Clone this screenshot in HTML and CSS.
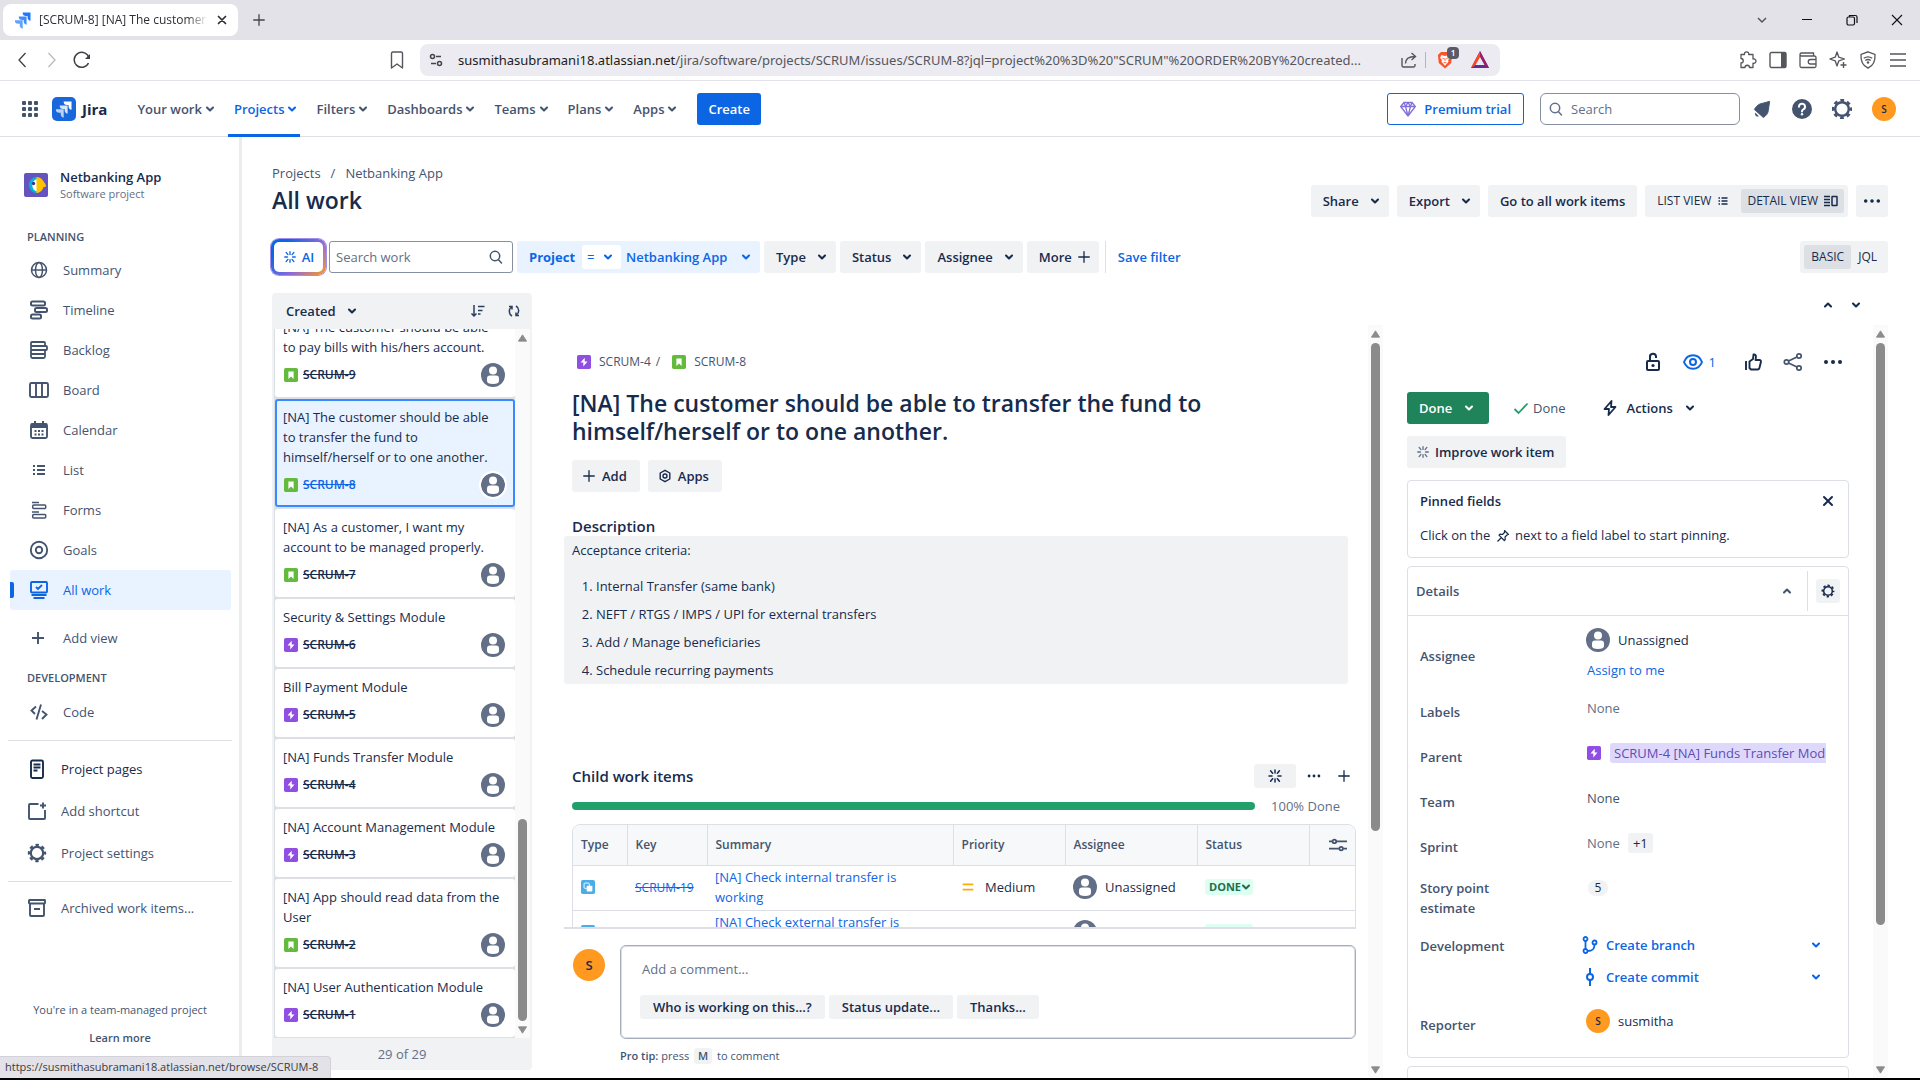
FILE: index.html
```html
<!DOCTYPE html>
<html lang="en">
<head>
<meta charset="utf-8">
<title>[SCRUM-8] [NA] The customer should be able to transfer the fund - Jira</title>
<link rel="stylesheet" href="styles.css">
</head>
<body>
<svg class="sprite" aria-hidden="true">
  <symbol id="chev" viewBox="0 0 16 16"><path d="M5 6.500l3 3 3-3" fill="none" stroke="currentColor" stroke-width="2.100" stroke-linecap="round" stroke-linejoin="round"/></symbol>
  <symbol id="chev-up" viewBox="0 0 16 16"><path d="M5 9.500l3-3 3 3" fill="none" stroke="currentColor" stroke-width="2.100" stroke-linecap="round" stroke-linejoin="round"/></symbol>
  <symbol id="jira" viewBox="0 0 24 24"><path d="M22 2H11.500a4.700 4.700 0 0 0 4.700 4.700h1.900v1.900A4.700 4.700 0 0 0 22 13z"/><path opacity=".85" d="M16.800 7.200H6.300A4.700 4.700 0 0 0 11 11.900h1.900v1.900a4.700 4.700 0 0 0 3.900 4.600z"/><path opacity=".7" d="M11.600 12.400H1.100a4.700 4.700 0 0 0 4.700 4.700h1.900V19a4.700 4.700 0 0 0 3.900 4.600z"/></symbol>
  <symbol id="search" viewBox="0 0 16 16"><g fill="none" stroke="currentColor" stroke-width="1.500" stroke-linecap="round"><circle cx="7" cy="7" r="4.700"/><path d="M10.500 10.800L13.500 14"/></g></symbol>
  <symbol id="rays" viewBox="0 0 16 16"><path d="M8 2v3M8 11v3M2 8h3M11 8h3M3.600 2.800l2 2.500M12.400 2.800l-2 2.500M3.600 13.200l2-2.500M12.400 13.200l-2-2.500" fill="none" stroke="currentColor" stroke-width="1.500" stroke-linecap="round"/></symbol>
  <symbol id="plus" viewBox="0 0 16 16"><path d="M8 2v12M2 8h12" fill="none" stroke="currentColor" stroke-width="1.500" stroke-linecap="round"/></symbol>
  <symbol id="dots" viewBox="0 0 20 20"><g fill="currentColor"><circle cx="3" cy="10" r="2"/><circle cx="10" cy="10" r="2"/><circle cx="17" cy="10" r="2"/></g></symbol>
  <symbol id="cross" viewBox="0 0 16 16"><path d="M4 4l8 8M12 4l-8 8" fill="none" stroke="currentColor" stroke-width="2" stroke-linecap="round"/></symbol>
  <symbol id="gear" viewBox="0 0 24 24"><g fill="none" stroke="currentColor"><circle cx="12" cy="12" r="6.800" stroke-width="2.400"/><circle cx="12" cy="12" r="8.800" stroke-width="2.600" stroke-dasharray="3.700 3.210" stroke-dashoffset="1.900"/></g></symbol>
  <symbol id="person" viewBox="0 0 24 24"><circle cx="12" cy="12" r="12" fill="#626f86"/><circle cx="12" cy="7.500" r="4" fill="#fff"/><path d="M6 15.500a3 3 0 0 1 3-3h6a3 3 0 0 1 3 3v2.500q0 3-6 3t-6-3z" fill="#fff"/></symbol>
  <symbol id="story" viewBox="0 0 16 16"><rect width="16" height="16" rx="2" fill="#63ba3c"/><path d="M5 4h6v8.500l-3-2.800-3 2.800z" fill="#fff"/></symbol>
  <symbol id="epic" viewBox="0 0 16 16"><rect width="16" height="16" rx="2" fill="#904ee2"/><path d="M8.800 3L4 8.700h3.200V13L12 7.300H8.800z" fill="#fff"/></symbol>
  <symbol id="subtask" viewBox="0 0 16 16"><rect width="16" height="16" rx="2" fill="#4bade8"/><rect x="3.500" y="3.500" width="6" height="6" rx="1" fill="none" stroke="#fff"/><rect x="6.500" y="6.500" width="6.500" height="6.500" rx="1" fill="#fff"/></symbol>
  <symbol id="list" viewBox="0 0 16 16"><path d="M2 4h2M2 8h2M2 12h2M6 4h8M6 8h8M6 12h8" stroke="currentColor" stroke-width="1.800"/></symbol>
  <symbol id="prio" viewBox="0 0 16 16"><path d="M2 5h12M2 11h12" stroke="#ffab00" stroke-width="2.200"/></symbol>
  <symbol id="tri-up" viewBox="0 0 10 8"><path d="M5 0.500L9.500 7.500H0.500z" fill="#8b8b8b" stroke="#8b8b8b" stroke-linejoin="round"/></symbol>
  <symbol id="tri-down" viewBox="0 0 10 8"><path d="M5 7.500L9.500 0.500H0.500z" fill="#8b8b8b" stroke="#8b8b8b" stroke-linejoin="round"/></symbol>
</svg>

<header class="tabstrip">
  <div class="tab">
    <svg class="i18 fav"><use href="#jira"/></svg>
    <span class="tab-title">[SCRUM-8] [NA] The customer should be able</span>
    <button class="bare" aria-label="Close tab"><svg class="i14"><use href="#cross"/></svg></button>
  </div>
  <button class="bare newtab" aria-label="New tab"><svg class="i14"><use href="#plus"/></svg></button>
  <div class="winctl">
    <button class="bare" aria-label="Search tabs"><svg class="i14" viewBox="0 0 14 14"><path d="M3 5l4 4 4-4" fill="none" stroke="#55565c" stroke-width="1.500"/></svg></button>
    <button class="bare" aria-label="Minimize"><svg class="i14" viewBox="0 0 14 14"><path d="M2 6.500h10" stroke="#111"/></svg></button>
    <button class="bare" aria-label="Restore"><svg class="i14" viewBox="0 0 14 14"><g fill="none" stroke="#111" stroke-width="1.200"><rect x="2" y="4" width="7.500" height="8" rx="1.500"/><path d="M4.500 4V2.500h6a1.500 1.500 0 0 1 1.500 1.500v6"/></g></svg></button>
    <button class="bare" aria-label="Close"><svg class="i14" viewBox="0 0 14 14"><path d="M2 2l10 10M12 2L2 12" stroke="#111" stroke-width="1.100"/></svg></button>
  </div>
</header>

<div class="toolbar">
  <div class="navbtns">
    <button class="bare" aria-label="Back"><svg class="i18" viewBox="0 0 18 18"><path d="M12.500 2L6 9l6.500 7" fill="none" stroke="#3f4045" stroke-width="1.300"/></svg></button>
    <button class="bare" aria-label="Forward"><svg class="i18" viewBox="0 0 18 18"><path d="M5.500 2L12 9l-6.500 7" fill="none" stroke="#b9b9bf" stroke-width="1.300"/></svg></button>
    <button class="bare" aria-label="Reload"><svg class="i18" viewBox="0 0 18 18"><path d="M15.500 12A7.500 7.500 0 1 1 16 7" fill="none" stroke="#3f4045" stroke-width="1.500"/><path d="M17 3v5h-5z" fill="#3f4045"/></svg></button>
  </div>
  <button class="bare bookmark" aria-label="Bookmark"><svg class="i18" viewBox="0 0 18 18"><path d="M3.500 2.500a1.500 1.500 0 0 1 1.500-1.500h8a1.500 1.500 0 0 1 1.500 1.500V17L9 13l-5.500 4z" fill="none" stroke="#55565c" stroke-width="1.400" stroke-linejoin="round"/></svg></button>
  <div class="urlbar">
    <svg class="i14" viewBox="0 0 14 14"><g fill="none" stroke="#44454b" stroke-width="1.500"><circle cx="3.500" cy="3.500" r="2"/><path d="M7 3.500h5M2 10.500h5"/><circle cx="10.500" cy="10.500" r="2"/></g></svg>
    <span class="url"><b>susmithasubramani18.atlassian.net</b>/jira/software/projects/SCRUM/issues/SCRUM-8?jql=project%20%3D%20"SCRUM"%20ORDER%20BY%20created...</span>
    <svg class="i16" viewBox="0 0 16 16"><g fill="none" stroke="#55565c" stroke-width="1.400"><path d="M1 6v7.500a1.500 1.500 0 0 0 1.500 1.500h10a1.500 1.500 0 0 0 1.500-1.500V12"/><path d="M4.500 11.500C4.500 7 8 4.500 14 4.500M10.500 1L14.500 4.500l-4 3.500"/></g></svg>
    <span class="url-sep"></span>
    <span class="brave"><svg width="16" height="18" viewBox="0 0 18 20"><path d="M4.500 1h9L17 4.500l-1 9L9 19.500 2 13.500l-1-9z" fill="#fb542b"/><path d="M5 4.500l4 1 4-1 1.500 3-2 2.500.5 2-4 4.500-4-4.500.5-2-2-2.500z" fill="#fff"/><path d="M6 8l2 .8M12 8l-2 .8M9 8v3M7.300 13h3.400" stroke="#fb542b" stroke-width="1"/></svg><i class="count">1</i></span>
    <svg width="18" height="18" viewBox="0 0 18 18"><path d="M9 0L0 17h18z" fill="#662d91"/><path d="M9 0L0 17l4-2.500L9 6z" fill="#ff4724"/><path d="M9 0l9 17-4-2.500L9 6z" fill="#9e1f63"/><path d="M9 6l-4.500 8h9z" fill="#ecebf1"/></svg>
  </div>
  <div class="exts">
    <svg class="i18" viewBox="0 0 18 18"><path d="M2 3.500h3.500c-.8-3.500 5-3.500 4.200 0H14V8c4-.8 4 5 0 4.200V16.500h-3.500c0-3-4.500-3-4.500 0H2V12c3 0 3-4.500 0-4.500z" fill="none" stroke="#55565c" stroke-width="1.300" stroke-linejoin="round"/></svg>
    <svg class="i18" viewBox="0 0 18 18"><rect x="1" y="1.500" width="16" height="15" rx="1.500" fill="none" stroke="#55565c" stroke-width="1.400"/><path d="M12 1.500h5v15h-5z" fill="#55565c"/></svg>
    <svg class="i18" viewBox="0 0 18 18"><g fill="none" stroke="#55565c" stroke-width="1.300"><path d="M1 3.500a1.500 1.500 0 0 1 1.500-1.500h12v3M1 3.500V15a1.500 1.500 0 0 0 1.500 1.500h13A1.500 1.500 0 0 0 17 15V6.500A1.500 1.500 0 0 0 15.500 5h-13A1.500 1.500 0 0 1 1 3.500z"/><path d="M17 8.500h-5.500a2.200 2.200 0 0 0 0 4.500H17"/></g></svg>
    <svg class="i18" viewBox="0 0 18 18"><path d="M8 1l1.800 5.200L15.500 8l-5.700 1.800L8 15l-1.800-5.200L.8 8l5.400-1.800z" fill="none" stroke="#55565c" stroke-width="1.300" stroke-linejoin="round"/><path d="M14.500 11v6M11.500 14h6" stroke="#55565c" stroke-width="1.400"/></svg>
    <svg class="i18" viewBox="0 0 18 18"><g fill="none" stroke="#55565c" stroke-width="1.300"><path d="M9 .8l7 2.700c.5 7-1.500 11-7 13.700C3.500 14.500 1.500 10.500 2 3.500z"/><path d="M4.800 7.300q4.200-3 8.400 0M6.300 9.500q2.700-2 5.400 0"/></g><circle cx="9" cy="11.500" r="1.200" fill="#55565c"/></svg>
    <svg class="i18" viewBox="0 0 18 18"><path d="M1 3h16M1 9h16M1 15h16" stroke="#55565c" stroke-width="1.500"/></svg>
  </div>
</div>

<nav class="topnav">
  <button class="bare grid9" aria-label="Apps switcher"><svg class="i18" viewBox="0 0 18 18" fill="#44546f"><rect x="1" y="1" width="4" height="4" rx="1"/><rect x="7" y="1" width="4" height="4" rx="1"/><rect x="13" y="1" width="4" height="4" rx="1"/><rect x="1" y="7" width="4" height="4" rx="1"/><rect x="7" y="7" width="4" height="4" rx="1"/><rect x="13" y="7" width="4" height="4" rx="1"/><rect x="1" y="13" width="4" height="4" rx="1"/><rect x="7" y="13" width="4" height="4" rx="1"/><rect x="13" y="13" width="4" height="4" rx="1"/></svg></button>
  <a href="#" class="logo"><span class="logo-box"><svg class="i18"><use href="#jira"/></svg></span>Jira</a>
  <div class="menu">
    <button>Your work<svg class="i16"><use href="#chev"/></svg></button>
    <button class="on">Projects<svg class="i16"><use href="#chev"/></svg></button>
    <button>Filters<svg class="i16"><use href="#chev"/></svg></button>
    <button>Dashboards<svg class="i16"><use href="#chev"/></svg></button>
    <button>Teams<svg class="i16"><use href="#chev"/></svg></button>
    <button>Plans<svg class="i16"><use href="#chev"/></svg></button>
    <button>Apps<svg class="i16"><use href="#chev"/></svg></button>
  </div>
  <button class="create">Create</button>
  <button class="premium"><svg class="i16" viewBox="0 0 16 16"><path d="M4 1.500h8l3.300 4L8 15 .7 5.500zM.7 5.500h14.600M4 1.500l1.500 4L8 15l2.500-9.500 1.500-4M5.500 5.500L8 1.500l2.500 4" fill="none" stroke="#8270db" stroke-width="1.300" stroke-linejoin="round"/></svg>Premium trial</button>
  <label class="topsearch"><svg class="i16"><use href="#search"/></svg><input type="text" placeholder="Search" aria-label="Search"></label>
  <button class="bare topicon" aria-label="Notifications"><svg class="i18" viewBox="0 0 20 20"><path d="M18.500 1.500L17 12c-.5 3-2 5-5.500 7.500L1.500 10.500C4 6 7 4 11 3.500z" fill="#44546f" stroke="#44546f" stroke-linejoin="round"/><path d="M2.500 14a3 3 0 0 0 4 4z" fill="#44546f"/></svg></button>
  <button class="bare topicon" aria-label="Help"><svg class="i20" viewBox="0 0 20 20"><circle cx="10" cy="10" r="10" fill="#44546f"/><path d="M7 7.700a3 3 0 1 1 4.300 2.700c-1 .5-1.300 1-1.300 2" fill="none" stroke="#fff" stroke-width="2" stroke-linecap="round"/><circle cx="10" cy="15.300" r="1.200" fill="#fff"/></svg></button>
  <button class="bare topicon" aria-label="Settings"><svg class="i20" viewBox="2 2 20 20"><use href="#gear" width="24" height="24"/></svg></button>
  <button class="bare avatar a24" aria-label="Profile">S</button>
</nav>

<div class="body">
  <aside class="side">
    <div class="proj">
      <svg class="i24" viewBox="0 0 24 24"><rect width="24" height="24" rx="2" fill="#6554c0"/><path d="M13 4a8 8 0 1 0 0 16z" fill="#00b8d9"/><path d="M13 6a6.500 6.500 0 0 0 0 12.500z" fill="#fff"/><path d="M12.500 4c5 0 7 4 9.500 8.500 0 2-2 1.500-2.500 1.500-1 3.500-3.500 6-7 6z" fill="#ffc400"/><circle cx="9.500" cy="10.500" r="1.700" fill="#403294"/></svg>
      <div><b>Netbanking App</b><small>Software project</small></div>
    </div>
    <h6>PLANNING</h6>
    <a href="#"><svg class="i20" viewBox="0 0 20 20"><g fill="none" stroke="currentColor" stroke-width="1.500"><circle cx="10" cy="10" r="7.500"/><ellipse cx="10" cy="10" rx="3.500" ry="7.500"/><path d="M3 10h14"/></g></svg>Summary</a>
    <a href="#"><svg class="i20" viewBox="0 0 20 20"><g fill="none" stroke="currentColor" stroke-width="2"><rect x="2" y="1.500" width="14" height="4" rx="1.500"/><rect x="6" y="8" width="12" height="4" rx="1.500"/><rect x="2" y="14.500" width="10" height="4" rx="1.500"/></g></svg>Timeline</a>
    <a href="#"><svg class="i20" viewBox="0 0 20 20"><g fill="none" stroke="currentColor" stroke-width="1.800"><rect x="2" y="2" width="14" height="4" rx="1"/><rect x="2" y="6" width="16" height="4" rx="1"/><path d="M2 10v6.500a1.500 1.500 0 0 0 1.500 1.500h11a1.500 1.500 0 0 0 1.500-1.500V10M2 14h14"/></g></svg>Backlog</a>
    <a href="#"><svg class="i20" viewBox="0 0 20 20"><g fill="none" stroke="currentColor" stroke-width="1.900"><rect x="1" y="3" width="18" height="14" rx="1.500"/><path d="M7 3v14M13 3v14"/></g></svg>Board</a>
    <a href="#"><svg class="i20" viewBox="0 0 20 20"><rect x="2" y="4" width="16" height="14" rx="1.500" fill="none" stroke="currentColor" stroke-width="1.900"/><path d="M2 3.500h16V8H2zM5 1h2v3H5zM13 1h2v3h-2z" fill="currentColor"/><path d="M5.500 11h2M9 11h2M12.500 11h2M5.500 14.500h2M9 14.500h2M12.500 14.500h2" stroke="currentColor" stroke-width="1.800"/></svg>Calendar</a>
    <a href="#"><svg class="i20" viewBox="-2 -2 20 20"><use href="#list" width="16" height="16"/></svg>List</a>
    <a href="#"><svg class="i20" viewBox="0 0 20 20"><g fill="none" stroke="currentColor" stroke-width="1.500"><path d="M3 2.500h7M3 12h7"/><rect x="3.700" y="5" width="13" height="3.500" rx="1"/><rect x="3.700" y="14.500" width="13" height="3.500" rx="1"/></g></svg>Forms</a>
    <a href="#"><svg class="i20" viewBox="0 0 20 20"><g fill="none" stroke="currentColor" stroke-width="1.900"><circle cx="10" cy="10" r="8.200"/><circle cx="10" cy="10" r="3.200"/></g></svg>Goals</a>
    <a href="#" class="cur"><svg class="i20" viewBox="0 0 20 20"><g fill="none" stroke="currentColor" stroke-width="1.900"><rect x="2" y="2" width="16" height="10.500" rx="1"/><path d="M7 7l2 2 4-4M2.500 15h15M4.500 18h11"/></g></svg>All work</a>
    <a href="#" class="addview"><svg class="i20" viewBox="0 0 20 20"><path d="M9 4v12M3 10h12" stroke="currentColor" stroke-width="1.900"/></svg>Add view</a>
    <h6 class="dev">DEVELOPMENT</h6>
    <a href="#"><svg class="i20" viewBox="0 0 20 20"><path d="M7 4.500L2.500 8.500 6 12M13 9l4.500 3.500L13 17M12 2.500L7.500 17.500" fill="none" stroke="currentColor" stroke-width="1.900"/></svg>Code</a>
    <hr class="rule-a">
    <a href="#" class="low strong"><svg class="i20" viewBox="0 0 20 20"><g fill="none" stroke="currentColor" stroke-width="1.900"><rect x="4" y="1.500" width="12" height="17.500" rx="1.500"/><path d="M6.500 5.500h7M6.500 8.500h7M6.500 11.500h4"/></g></svg>Project pages</a>
    <a href="#" class="low"><svg class="i20" viewBox="0 0 20 20"><path d="M11.500 3H3a1 1 0 0 0-1 1v13a1 1 0 0 0 1 1h14a1 1 0 0 0 1-1V9M16 1.500v6M13 4.500h6" fill="none" stroke="currentColor" stroke-width="1.900"/></svg>Add shortcut</a>
    <a href="#" class="low"><svg class="i20" viewBox="1 1 22 22"><use href="#gear" width="24" height="24"/></svg>Project settings</a>
    <hr class="rule-b">
    <a href="#" class="low"><svg class="i20" viewBox="0 0 20 20"><g fill="none" stroke="currentColor" stroke-width="1.900"><rect x="2" y="2" width="16" height="3.500" rx=".5"/><path d="M3 5.500V17a1 1 0 0 0 1 1h12a1 1 0 0 0 1-1V5.500M7 11h6"/></g></svg>Archived work items...</a>
    <p class="managed">You're in a team-managed project</p>
    <a href="#" class="learn">Learn more</a>
  </aside>

  <main>
    <p class="crumbs"><a href="#">Projects</a><span>/</span><a href="#">Netbanking App</a></p>
    <div class="headrow">
      <h1>All work</h1>
      <div class="acts">
        <button class="btn drop">Share<svg class="i16"><use href="#chev"/></svg></button>
        <button class="btn drop">Export<svg class="i16"><use href="#chev"/></svg></button>
        <button class="btn">Go to all work items</button>
        <div class="toggle">
          <button>LIST VIEW<svg class="i12"><use href="#list"/></svg></button>
          <button class="sel">DETAIL VIEW<svg class="i14" viewBox="0 0 14 14"><path d="M0 2.500h6M0 5.500h6M0 8.500h6M0 11.500h6" stroke="currentColor" stroke-width="1.500"/><rect x="8" y="2.500" width="5" height="9" rx=".5" fill="none" stroke="currentColor" stroke-width="1.500"/></svg></button>
        </div>
        <button class="btn sq" aria-label="More actions"><svg class="i18"><use href="#dots"/></svg></button>
      </div>
    </div>

    <div class="filters">
      <button class="ai"><svg class="i14"><use href="#rays"/></svg>AI</button>
      <label class="fsearch"><input type="text" placeholder="Search work" aria-label="Search work"><svg class="i16"><use href="#search"/></svg></label>
      <div class="jqlpart">
        <button class="pj">Project</button><button class="eq">=<svg class="i16"><use href="#chev"/></svg></button><button class="val">Netbanking App<svg class="i16"><use href="#chev"/></svg></button>
      </div>
      <button class="btn drop">Type<svg class="i16"><use href="#chev"/></svg></button>
      <button class="btn drop">Status<svg class="i16"><use href="#chev"/></svg></button>
      <button class="btn drop">Assignee<svg class="i16"><use href="#chev"/></svg></button>
      <button class="btn more">More<svg class="i14"><use href="#plus"/></svg></button>
      <span class="vsep"></span>
      <a href="#" class="save">Save filter</a>
      <div class="toggle mode"><button class="sel">BASIC</button><button>JQL</button></div>
    </div>

    <div class="split">
      <section class="issues">
        <div class="issues-head"><button class="bare created">Created<svg class="i16"><use href="#chev"/></svg></button>
          <button class="bare" aria-label="Sort order"><svg class="i16" viewBox="0 0 16 16"><path d="M4 2v11M1.500 10.500L4 13l2.500-2.500M8 3.500h6.500M8 7.500h4.500M8 11h2.500" fill="none" stroke="#2c3e5d" stroke-width="1.500"/></svg></button>
          <button class="bare" aria-label="Refresh"><svg class="i16" viewBox="0 0 16 16"><path d="M6 13C2.500 11 2.500 6 5.500 4M3 3.500h3v3M10 3C13.500 5 13.500 10 10.500 12M13 12.500h-3v-3" fill="none" stroke="#2c3e5d" stroke-width="1.500"/></svg></button>
        </div>
        <div class="issues-body">
          <div class="cards">
            <article class="card"><p>[NA] The customer should be able to pay bills with his/hers account.</p><div><svg class="i14"><use href="#story"/></svg><a href="#">SCRUM-9</a><svg class="i24 who"><use href="#person"/></svg></div></article>
            <article class="card picked"><p>[NA] The customer should be able to transfer the fund to himself/herself or to one another.</p><div><svg class="i14"><use href="#story"/></svg><a href="#">SCRUM-8</a><svg class="i24 who"><use href="#person"/></svg></div></article>
            <article class="card"><p>[NA] As a customer, I want my account to be managed properly.</p><div><svg class="i14"><use href="#story"/></svg><a href="#">SCRUM-7</a><svg class="i24 who"><use href="#person"/></svg></div></article>
            <article class="card"><p>Security &amp; Settings Module</p><div><svg class="i14"><use href="#epic"/></svg><a href="#">SCRUM-6</a><svg class="i24 who"><use href="#person"/></svg></div></article>
            <article class="card"><p>Bill Payment Module</p><div><svg class="i14"><use href="#epic"/></svg><a href="#">SCRUM-5</a><svg class="i24 who"><use href="#person"/></svg></div></article>
            <article class="card"><p>[NA] Funds Transfer Module</p><div><svg class="i14"><use href="#epic"/></svg><a href="#">SCRUM-4</a><svg class="i24 who"><use href="#person"/></svg></div></article>
            <article class="card"><p>[NA] Account Management Module</p><div><svg class="i14"><use href="#epic"/></svg><a href="#">SCRUM-3</a><svg class="i24 who"><use href="#person"/></svg></div></article>
            <article class="card"><p>[NA] App should read data from the User</p><div><svg class="i14"><use href="#story"/></svg><a href="#">SCRUM-2</a><svg class="i24 who"><use href="#person"/></svg></div></article>
            <article class="card"><p>[NA] User Authentication Module</p><div><svg class="i14"><use href="#epic"/></svg><a href="#">SCRUM-1</a><svg class="i24 who"><use href="#person"/></svg></div></article>
          </div>
          <div class="sbar"><svg class="tri"><use href="#tri-up"/></svg><div class="rail low-thumb"><i></i></div><svg class="tri"><use href="#tri-down"/></svg></div>
        </div>
        <div class="issues-foot">29 of 29</div>
      </section>

      <section class="detail">
        <div class="pager"><button class="bare" aria-label="Previous"><svg class="i16"><use href="#chev-up"/></svg></button><button class="bare" aria-label="Next"><svg class="i16"><use href="#chev"/></svg></button></div>
        <div class="panes">
          <div class="issue">
            <div class="scroll">
              <p class="keys"><svg class="i14"><use href="#epic"/></svg><a href="#">SCRUM-4</a><span>/</span><svg class="i14"><use href="#story"/></svg><a href="#">SCRUM-8</a></p>
              <h2>[NA] The customer should be able to transfer the fund to himself/herself or to one another.</h2>
              <div class="addrow">
                <button class="btn"><svg class="i14"><use href="#plus"/></svg>Add</button>
                <button class="btn"><svg class="i14" viewBox="0 0 14 14"><g fill="none" stroke="currentColor" stroke-width="1.400"><path d="M7 1.300l4.800 2.700v6L7 12.700 2.200 10V4z" stroke-linejoin="round"/><circle cx="7" cy="7" r="2"/></g></svg>Apps</button>
              </div>
              <h3>Description</h3>
              <div class="desc"><p>Acceptance criteria:</p>
                <ol><li>Internal Transfer (same bank)</li><li>NEFT / RTGS / IMPS / UPI for external transfers</li><li>Add / Manage beneficiaries</li><li>Schedule recurring payments</li></ol>
              </div>
              <div class="childhead"><h3>Child work items</h3>
                <button class="raybtn" aria-label="Suggest child work items"><svg class="i16"><use href="#rays"/></svg></button>
                <button class="bare" aria-label="More"><svg class="i14"><use href="#dots"/></svg></button>
                <button class="bare" aria-label="Create child"><svg class="i14"><use href="#plus"/></svg></button>
              </div>
              <div class="prog"><div class="bar"></div><span>100% Done</span></div>
              <div class="tbl">
                <table>
                  <colgroup><col class="c1"><col class="c2"><col class="c3"><col class="c4"><col class="c5"><col class="c6"><col class="c7"></colgroup>
                  <thead><tr><th>Type</th><th>Key</th><th>Summary</th><th>Priority</th><th>Assignee</th><th>Status</th><th class="cfg"><svg class="i18" viewBox="0 0 20 20"><g fill="none" stroke="#44546f" stroke-width="2"><circle cx="6" cy="6" r="2"/><path d="M0 6h4M8 6h12M0 14h11M16 14h4"/><circle cx="13.500" cy="14" r="2"/></g></svg></th></tr></thead>
                  <tbody>
                    <tr><td><svg class="i14"><use href="#subtask"/></svg></td><td><a href="#" class="done">SCRUM-19</a></td><td class="sum"><a href="#">[NA] Check internal transfer is working</a></td><td><span class="cell"><svg class="i14"><use href="#prio"/></svg>Medium</span></td><td><span class="cell who-cell"><svg class="i24"><use href="#person"/></svg>Unassigned</span></td><td><button class="loz">DONE<svg class="i10" viewBox="3 3 10 10"><use href="#chev" width="16" height="16"/></svg></button></td><td></td></tr>
                    <tr><td><svg class="i14"><use href="#subtask"/></svg></td><td><a href="#" class="done">SCRUM-20</a></td><td class="sum"><a href="#">[NA] Check external transfer is working</a></td><td><span class="cell"><svg class="i14"><use href="#prio"/></svg>Medium</span></td><td><span class="cell who-cell"><svg class="i24"><use href="#person"/></svg>Unassigned</span></td><td><button class="loz">DONE<svg class="i10" viewBox="3 3 10 10"><use href="#chev" width="16" height="16"/></svg></button></td><td></td></tr>
                  </tbody>
                </table>
              </div>
            </div>
            <div class="comment">
              <span class="avatar a32">S</span>
              <div class="cwrap">
                <div class="cbox"><textarea rows="1" placeholder="Add a comment..." aria-label="Add a comment"></textarea>
                  <div><button>Who is working on this...?</button><button>Status update...</button><button>Thanks...</button></div>
                </div>
                <p class="tip"><b>Pro tip:</b> press <kbd>M</kbd> to comment</p>
              </div>
            </div>
          </div>
          <div class="sbar tall"><svg class="tri"><use href="#tri-up"/></svg><div class="rail mid-thumb"><i></i></div><svg class="tri"><use href="#tri-down"/></svg></div>

          <div class="meta">
            <div class="icons">
              <button class="bare" aria-label="Unlock"><svg class="i20" viewBox="0 0 20 20"><g fill="none" stroke="#172b4d" stroke-width="2"><rect x="4" y="9" width="12" height="9" rx="1"/><path d="M7 9V5a3 3 0 0 1 6-.5v1.500"/></g><circle cx="10" cy="13.500" r="1.600" fill="#172b4d"/></svg></button>
              <button class="bare watch" aria-label="Watchers"><svg class="i20" viewBox="0 0 20 20"><g fill="none" stroke="#0c66e4" stroke-width="2"><path d="M1 10c3.500-9 14.500-9 18 0-3.500 9-14.500 9-18 0z"/><circle cx="10" cy="10" r="3"/></g></svg>1</button>
              <button class="bare" aria-label="Vote"><svg class="i20" viewBox="0 0 20 20"><path d="M3 9v9M6.500 9.500L10 7l.5-4.500c2.500-.5 3 1.500 2 5.500h4c1 0 1.700 1 1.400 2l-1.500 6c-.2 1-1 1.500-2 1.500H8L6.500 16z" fill="none" stroke="#172b4d" stroke-width="1.900" stroke-linejoin="round"/></svg></button>
              <button class="bare" aria-label="Share"><svg class="i20" viewBox="0 0 20 20"><g fill="none" stroke="#44546f" stroke-width="1.700"><circle cx="3.500" cy="10" r="2.200"/><circle cx="16" cy="4" r="2.200"/><circle cx="16" cy="16" r="2.200"/><path d="M5.500 9L14 5M5.500 11l8.500 4"/></g></svg></button>
              <button class="bare" aria-label="Actions"><svg class="i20"><use href="#dots"/></svg></button>
            </div>
            <div class="status"><button class="donebtn">Done<svg class="i16"><use href="#chev"/></svg></button>
              <span class="res"><svg class="i16" viewBox="0 0 16 16"><path d="M1.500 9l4 4L14.500 3.500" fill="none" stroke="#22a06b" stroke-width="1.800"/></svg>Done</span>
              <button class="bare actions"><svg class="i16" viewBox="0 0 16 16"><path d="M9.500 1L2.500 9h4.500l-.5 6L13.500 7H9z" fill="none" stroke="#172b4d" stroke-width="1.800" stroke-linejoin="round"/></svg>Actions<svg class="i16 ch"><use href="#chev"/></svg></button>
            </div>
            <button class="btn improve"><svg class="i14"><use href="#rays"/></svg>Improve work item</button>
            <div class="box pinned"><div><b>Pinned fields</b><button class="bare" aria-label="Dismiss"><svg class="i16"><use href="#cross"/></svg></button></div>
              <p>Click on the <svg class="i14" viewBox="0 0 14 14"><path d="M8.500 1.500l4 4-1.500.5-2 2 .3 2.500-1 1L3 6.200l1-1 2.500.3 2-2zM5 9l-3.500 3.500" fill="none" stroke="currentColor" stroke-width="1.200" stroke-linejoin="round"/></svg> next to a field label to start pinning.</p></div>
            <div class="box details">
              <div class="dhead"><span>Details</span><svg class="i16"><use href="#chev-up"/></svg><i></i><button class="gearbtn" aria-label="Configure"><svg class="i14" viewBox="1 1 22 22"><use href="#gear" width="24" height="24"/></svg></button></div>
              <div class="row r-assignee"><b>Assignee</b><div><span class="user"><svg class="i24"><use href="#person"/></svg>Unassigned</span><a href="#">Assign to me</a></div></div>
              <div class="row"><b>Labels</b><div class="mute">None</div></div>
              <div class="row"><b>Parent</b><div class="parent"><svg class="i14"><use href="#epic"/></svg><a href="#">SCRUM-4 [NA] Funds Transfer Module</a></div></div>
              <div class="row"><b>Team</b><div class="team">None</div></div>
              <div class="row"><b>Sprint</b><div class="mute">None<span class="plus1">+1</span></div></div>
              <div class="row r-story"><b>Story point estimate</b><div><span class="pts">5</span></div></div>
              <div class="row r-dev"><b>Development</b><div>
                <button class="devlink"><svg class="i18" viewBox="0 0 18 18"><g fill="none" stroke="currentColor" stroke-width="1.800"><circle cx="4.500" cy="3" r="2"/><circle cx="4.500" cy="15" r="2"/><circle cx="13.500" cy="6.500" r="2"/><path d="M4.500 5v8M6.500 15c5 0 7-1.500 7-6.500"/></g></svg>Create branch<svg class="i16"><use href="#chev"/></svg></button>
                <button class="devlink"><svg class="i18" viewBox="0 0 18 18"><g fill="none" stroke="currentColor" stroke-width="2"><circle cx="9" cy="9" r="3"/><path d="M9 0v6M9 12v6"/></g></svg>Create commit<svg class="i16"><use href="#chev"/></svg></button></div></div>
              <div class="row r-rep"><b>Reporter</b><div><span class="user"><span class="avatar a24">S</span>susmitha</span></div></div>
            </div>
            <div class="box next"></div>
          </div>
          <div class="sbar tall"><svg class="tri"><use href="#tri-up"/></svg><div class="rail long-thumb"><i></i></div><svg class="tri"><use href="#tri-down"/></svg></div>
        </div>
      </section>
    </div>
  </main>
</div>
<div class="statusurl">https://susmithasubramani18.atlassian.net/browse/SCRUM-8</div>
</body>
</html>
```
FILE: styles.css
```css
* { box-sizing: border-box; }
body {
  margin: 0; height: 100vh; overflow: hidden; display: flex; flex-direction: column;
  font: 13px/20px "Open Sans", "Noto Sans", sans-serif; color: #172b4d; background: #fff;
  border-bottom: 2px solid #000; position: relative;
}
p, h1, h2, h3, h6, ol, hr { margin: 0; padding: 0; }
a { color: inherit; text-decoration: none; }
button, input, textarea { font: inherit; color: inherit; border: 0; margin: 0; padding: 0; background: none; outline: 0; }
button { display: flex; align-items: center; white-space: nowrap; }
svg { display: block; flex: none; }
.sprite { width: 0; height: 0; position: absolute; }
.bare { justify-content: center; }
.i10 { width: 10px; height: 10px; }
.i12 { width: 12px; height: 12px; }
.i14 { width: 14px; height: 14px; }
.i16 { width: 16px; height: 16px; }
.i18 { width: 18px; height: 18px; }
.i20 { width: 20px; height: 20px; }
.i24 { width: 24px; height: 24px; }
.avatar { display: flex; align-items: center; justify-content: center; flex: none; border-radius: 50%; background: #ff991f; color: #172b4d; font-weight: 600; }
.a24 { width: 24px; height: 24px; font-size: 10px; }
.a32 { width: 32px; height: 32px; font-size: 13px; }

/* browser chrome */
.tabstrip { flex: none; height: 40px; background: #e3e2e8; display: flex; align-items: center; padding-left: 3px; }
.tab { width: 235px; height: 32px; background: #fff; border-radius: 8px; display: flex; align-items: center; padding: 0 9px 0 11px; gap: 7px; color: #2f3036; }
.fav { fill: #1d7afc; }
.tab-title { flex: 1; overflow: hidden; white-space: nowrap; font-size: 12px; -webkit-mask-image: linear-gradient(90deg, #000 88%, transparent); mask-image: linear-gradient(90deg, #000 88%, transparent); }
.newtab { margin-left: 14px; color: #44454b; }
.winctl { margin-left: auto; display: flex; gap: 31px; padding-right: 16px; }
.toolbar { flex: none; height: 41px; border-bottom: 1px solid #e3e2e8; display: flex; align-items: center; padding: 0 13px; }
.navbtns { display: flex; gap: 12px; width: 375px; }
.urlbar { width: 1080px; height: 32px; margin-left: 14px; border-radius: 8px; background: #ecebf1; display: flex; align-items: center; padding: 0 11px 0 9px; color: #55565c; }
.url { flex: 1; margin-left: 15px; font-size: 13px; font-family: "Noto Sans", sans-serif; white-space: nowrap; overflow: hidden; }
.url b { font-weight: 400; color: #1c1c21; }
.url-sep { width: 1px; height: 16px; background: #b5b5bd; margin: 0 11px 0 8px; }
.brave { position: relative; margin-right: 18px; }
.count { position: absolute; left: 10px; top: -4px; width: 12px; height: 12px; border-radius: 4px; background: #5a5b66; color: #fff; font: 600 9px/12px "Open Sans", sans-serif; text-align: center; }
.exts { margin-left: auto; display: flex; gap: 12px; }

/* product navigation */
.topnav { flex: none; height: 56px; border-bottom: 1px solid #dcdfe4; display: flex; align-items: center; padding: 0 24px 0 21px; color: #44546f; }
.logo { display: flex; align-items: center; gap: 6px; margin: 0 24px 0 13px; font-size: 15px; font-weight: 700; color: #172b4d; }
.logo-box { width: 24px; height: 24px; border-radius: 5px; background: #1868db; fill: #fff; display: flex; align-items: center; justify-content: center; }
.menu { display: flex; align-self: stretch; gap: 10px; margin-bottom: -1px; }
.menu button { padding: 0 0 0 6px; border-bottom: 3px solid transparent; border-top: 3px solid transparent; font-weight: 600; }
.menu .on { color: #0c66e4; border-bottom-color: #0c66e4; }
.create { height: 32px; padding: 0 11px; margin-left: 17px; border-radius: 3px; background: #0c66e4; color: #fff; font-weight: 600; }
.premium { height: 32px; margin-left: auto; margin-right: 16px; padding: 0 12px; gap: 8px; border: 1px solid #0c66e4; border-radius: 3px; color: #0c66e4; font-weight: 600; }
.topsearch { width: 200px; height: 32px; border: 1px solid #8590a2; border-radius: 6px; display: flex; align-items: center; padding: 0 7px; gap: 7px; margin-right: 10px; color: #626f86; }
.topsearch input { flex: 1; min-width: 0; }
::placeholder { color: #626f86; opacity: 1; font-weight: 400; }
.topicon { width: 24px; height: 24px; margin-right: 16px; }
.topicon + .avatar { margin-left: 2px; }

.body { flex: 1; min-height: 0; display: flex; }
/* project sidebar */
.side { flex: none; width: 242px; border-right: 3px solid #ebecf0; padding: 24px 7px 0 8px; display: flex; flex-direction: column; color: #44546f; }
.proj { display: flex; gap: 12px; align-items: center; padding: 0 16px; height: 48px; }
.proj b { display: block; color: #172b4d; font-weight: 600; line-height: 18px; }
.proj small { display: block; font-size: 11px; line-height: 16px; color: #626f86; }
.side h6 { font: 600 11px/16px "Open Sans", sans-serif; padding-left: 19px; margin: 20px 0 5px; }
.side a { display: flex; align-items: center; gap: 14px; height: 40px; margin: 0 1px 0 2px; padding-left: 19px; border-radius: 3px; }
.side a.cur { background: #e9f2ff; color: #0c66e4; position: relative; }
.cur::before { content: ""; position: absolute; left: 0; top: 12px; width: 4px; height: 16px; background: #0c66e4; border-radius: 0 2px 2px 0; }
.side a.addview { margin-top: 8px; }
.side h6.dev { margin: 12px 0 6px; }
.side hr { flex: none; border: 0; height: 1px; background: #dcdfe4; margin: 8px 0 7px; }
.side a.low { height: 42px; margin-left: 0; }
.side .strong { color: #172b4d; }
.side hr.rule-b { margin: 7px 0 5px; }
.managed { margin-top: auto; font-size: 11px; text-align: center; }
.side a.learn { font-size: 11px; font-weight: 600; height: 20px; margin: 8px 0 30px; padding: 0; justify-content: center; }

/* page header */
main { flex: 1; min-width: 0; display: flex; flex-direction: column; padding: 26px 32px 0 30px; }
.crumbs { display: flex; gap: 10px; color: #44546f; }
.headrow { display: flex; justify-content: space-between; height: 34px; align-items: flex-end; }
h1 { font-size: 23px; font-weight: 600; line-height: 28px; align-self: center; }
.acts { display: flex; gap: 8px; }
.btn { height: 32px; padding: 0 12px; border-radius: 3px; background: #f1f2f4; font-weight: 600; gap: 8px; flex: none; }
.drop { padding-right: 6px; }
.sq.btn { width: 32px; padding: 0; justify-content: center; }
.toggle { display: flex; height: 32px; padding: 4px; border-radius: 3px; background: #f1f2f4; font-size: 12px; }
.toggle button { padding: 0 6px; gap: 6px; border-radius: 3px; }
.toggle .sel { background: #dcdfe4; }
.acts .toggle button:first-child { padding: 0 12px 0 8px; }
.filters { display: flex; align-items: center; gap: 4px; margin: 22px 0 18px; height: 36px; }
.ai { height: 36px; width: 55px; margin: 0 -1px; justify-content: center; gap: 5px; border: 3px solid transparent; border-radius: 8px; color: #0c66e4; font-weight: 600; background: linear-gradient(#fff, #fff) padding-box, linear-gradient(135deg, #0c66e4 20%, #8f6ad8 60%, #ff991f) border-box; box-shadow: 0 0 0 1px #9f8fef; }
.fsearch { width: 184px; height: 32px; border: 1px solid #8590a2; border-radius: 3px; display: flex; align-items: center; padding: 0 8px 0 6px; }
.fsearch input { flex: 1; min-width: 0; }
.fsearch svg { color: #44546f; }
.jqlpart { display: flex; align-items: center; height: 32px; width: 243px; border-radius: 3px; background: #e9f2ff; color: #0c66e4; }
.pj { width: 65px; padding-left: 12px; font-weight: 700; }
.eq { flex: none; width: 39px; height: 24px; background: #fff; border-radius: 3px; padding: 0 5px; justify-content: space-between; }
.val { flex: 1; padding: 0 6px 0 5px; justify-content: space-between; font-weight: 600; }
.more.btn { gap: 5px; padding-right: 8px; }
.vsep { width: 1px; height: 32px; background: #dcdfe4; margin: 0 8px 0 2px; }
.save { color: #0c66e4; font-weight: 600; }
.mode { margin-left: auto; }
.mode.toggle button { padding: 0 7px; }

/* list column */
.split { flex: 1; min-height: 0; display: flex; gap: 32px; }
.issues { flex: none; width: 260px; margin: 0 0 8px; display: flex; flex-direction: column; background: #f1f2f4; border-radius: 4px; }
.issues-head { flex: none; display: flex; align-items: center; height: 36px; padding: 0 10px 0 14px; gap: 20px; }
.created { margin-right: auto; gap: 8px; font-weight: 600; }
.issues-body { flex: 1; min-height: 0; display: flex; padding: 0 2px; }
.cards { flex: 1; min-width: 0; overflow: hidden; display: flex; flex-direction: column; justify-content: flex-end; gap: 2px; padding: 0 0 1px 1px; background: #dcdfe4; }
.card { flex: none; background: #fff; border-radius: 3px; padding: 8px 8px 10px; }
.card p { padding-right: 6px; }
.card div { display: flex; align-items: center; margin-top: 6px; padding: 0 2px 0 1px; gap: 5px; }
.card a { font-size: 12px; font-weight: 600; text-decoration: line-through; }
.who { margin-left: auto; }
.card.picked { background: #e9f2ff; box-shadow: inset 0 0 0 2px #388bff; }
.picked a { color: #0c66e4; }
.picked .who { border-radius: 50%; box-shadow: 0 0 0 2px #fff; }
.issues-foot { flex: none; height: 32px; line-height: 32px; text-align: center; color: #626f86; }
.sbar { flex: none; width: 15px; background: #fafafa; display: flex; flex-direction: column; align-items: center; padding: 5px 0 4px; gap: 5px; }
.tri { width: 9px; height: 8px; }
.rail { flex: 1; width: 9px; display: flex; flex-direction: column; }
.rail i { display: block; border-radius: 5px; background: #8b8b8b; }
.low-thumb { justify-content: flex-end; }
.low-thumb i { height: 30%; }
.mid-thumb i { height: 68%; }
.long-thumb i { height: 81%; }

/* issue detail */
.detail { flex: 1; min-width: 0; display: flex; flex-direction: column; }
.pager { flex: none; display: flex; justify-content: flex-end; gap: 12px; padding: 4px 24px 0 0; height: 32px; align-items: flex-start; }
.panes { flex: 1; min-height: 0; display: flex; }
.issue { flex: 1; min-width: 0; display: flex; flex-direction: column; padding-right: 12px; }
.scroll { flex: 1; min-height: 0; overflow: hidden; padding: 27px 0 0 8px; border-bottom: 2px solid #dcdfe4; }
.keys { display: flex; align-items: center; gap: 8px; font-size: 12px; color: #44546f; padding-left: 5px; height: 20px; }
.keys span { margin: 0 4px 0 -3px; }
h2 { font-size: 23px; font-weight: 600; line-height: 28px; margin: 17px 100px 0 0; }
.addrow { display: flex; gap: 8px; margin-top: 15px; }
.addrow .btn { padding: 0 13px 0 10px; gap: 6px; }
h3 { font-size: 15px; line-height: 20px; font-weight: 600; }
.addrow + h3 { margin-top: 24px; }
.desc { margin: 0 8px 0 -8px; padding: 4px 8px; background: #f1f2f4; border-radius: 3px; }
.desc ol { margin: 16px 0 0; padding-left: 24px; }
.desc li + li { margin-top: 8px; }
.childhead { display: flex; align-items: center; gap: 11px; margin-top: 80px; padding-right: 5px; height: 24px; }
.childhead h3 { margin-right: auto; }
.raybtn { width: 42px; height: 24px; justify-content: center; background: #f1f2f4; border-radius: 3px; }
.childhead button + button + button { margin-left: 5px; }
.prog { display: flex; align-items: center; gap: 16px; padding-right: 16px; margin: 8px 0; color: #626f86; }
.bar { flex: 1; height: 8px; border-radius: 4px; background: #22a06b; }
.tbl { border: 1px solid #dcdfe4; border-radius: 8px 8px 0 0; overflow: hidden; }
table { width: 100%; border-collapse: collapse; table-layout: fixed; }
.c1 { width: 54px; } .c2 { width: 80px; } .c4 { width: 112px; } .c5 { width: 132px; } .c6 { width: 112px; } .c7 { width: 46px; }
th { height: 40px; padding: 0 8px; text-align: left; font-size: 12px; font-weight: 600; color: #44546f; background: #f7f8f9; border-bottom: 1px solid #dcdfe4; }
th + th { border-left: 1px solid #dcdfe4; }
.cfg svg { margin-left: auto; }
td { height: 45px; padding: 1px 8px 2px; border-bottom: 1px solid #dcdfe4; }
td.sum { padding-right: 40px; }
td a { color: #0c66e4; }
td a.done { font-size: 12px; text-decoration: line-through; }
.cell { display: flex; align-items: center; gap: 10px; }
.who-cell { gap: 8px; }
.loz { height: 16px; padding: 0 2px 0 4px; border-radius: 3px; background: #dcfff1; color: #216e4e; font-size: 11px; font-weight: 700; }
.comment { flex: none; display: flex; gap: 15px; padding: 16px 0 0 9px; height: 149px; }
.comment .avatar { margin-top: 4px; }
.cwrap { flex: 1; }
.cbox { height: 94px; border: 1px solid #a5adba; box-shadow: inset 0 0 0 1px #dcdfe4; border-radius: 6px; padding: 13px 19px; }
.cbox textarea { display: block; width: 100%; height: 20px; padding-left: 2px; resize: none; overflow: hidden; }
.cbox div { display: flex; gap: 4px; margin-top: 16px; }
.cbox button { height: 24px; padding: 0 13px; background: #f1f2f4; border-radius: 3px; font-weight: 600; }
.tip { font-size: 11px; color: #44546f; margin-top: 7px; }
.tip b { font-weight: 600; }
kbd { display: inline-block; font: 600 11px/16px "Open Sans", sans-serif; padding: 0 4px; margin: 0 2px; background: #f1f2f4; border-radius: 3px; }

/* fields column */
.meta { flex: none; width: 490px; padding: 27px 24px 0; overflow: hidden; }
.icons { display: flex; justify-content: flex-end; align-items: center; gap: 20px; padding-right: 6px; height: 20px; }
.watch { gap: 6px; color: #0c66e4; margin-right: 7px; }
.status { display: flex; align-items: center; margin-top: 20px; height: 32px; }
.donebtn { height: 32px; width: 82px; padding: 0 12px; justify-content: space-between; background: #1f845a; color: #fff; border-radius: 3px; font-weight: 600; }
.res { display: flex; align-items: center; gap: 4px; margin-left: 24px; color: #44546f; }
.actions { margin-left: 36px; gap: 9px; font-weight: 600; }
.improve.btn { margin-top: 12px; padding-left: 9px; gap: 5px; }
.improve svg { color: #626f86; }
.box { border: 1px solid #dcdfe4; border-radius: 4px; }
.pinned { margin-top: 12px; padding: 10px 12px; height: 78px; }
.pinned div { display: flex; justify-content: space-between; }
.pinned b { font-weight: 600; }
.pinned p { margin-top: 14px; }
.pinned p svg { display: inline-block; vertical-align: -3px; margin: 0 2px; }
.details { margin-top: 8px; }
.dhead { height: 49px; border-bottom: 1px solid #dcdfe4; display: flex; align-items: center; padding: 0 8px; color: #44546f; }
.dhead span { margin-right: auto; font-weight: 600; }
.dhead i { width: 1px; height: 40px; background: #dcdfe4; margin: 0 8px 0 12px; }
.gearbtn { width: 24px; height: 24px; border-radius: 3px; background: #f1f2f4; justify-content: center; color: #172b4d; }
.row { display: grid; grid-template-columns: 167px 1fr; min-height: 45px; padding: 8px 12px 0; }
.row > b { font-weight: 600; color: #44546f; padding-top: 4px; max-width: 110px; }
.row > div { min-width: 0; }
.row a { color: #0c66e4; }
.row .mute { color: #626f86; }
.row .team { color: #44546f; }
.r-assignee { min-height: 74px; padding-top: 12px; }
.r-assignee > b { padding-top: 18px; }
.r-assignee a { display: block; margin-top: 8px; }
.user { display: flex; align-items: center; gap: 8px; margin-left: -1px; }
.parent { display: flex; align-items: center; gap: 9px; height: 20px; overflow: hidden; margin-right: 10px; }
.row .parent a { background: #dfd8fd; color: #5e4db2; white-space: nowrap; padding: 0 4px; border-radius: 3px; flex: none; }
.plus1 { display: inline-block; margin-left: 8px; padding: 0 5px; background: #f1f2f4; color: #172b4d; border-radius: 3px; }
.r-story { min-height: 58px; }
.r-story > b { padding-top: 0; }
.pts { display: block; width: 20px; height: 16px; margin: 2px 0 0 1px; border-radius: 8px; background: #f1f2f4; font-size: 12px; line-height: 16px; text-align: center; }
.r-dev { min-height: 76px; padding-top: 1px; }
.r-dev > b { padding-top: 7px; }
.devlink { width: 100%; height: 32px; gap: 7px; padding-right: 12px; color: #0c66e4; font-weight: 600; }
.devlink svg:first-child { margin-left: -6px; }
.devlink svg:last-child { margin-left: auto; }
.r-rep { min-height: 53px; padding-top: 5px; }
.r-rep > b { padding-top: 6px; }
.next { margin-top: 8px; height: 60px; }

.statusurl { position: absolute; left: 0; bottom: 0; height: 22px; padding: 0 12px 0 5px; background: #e3e2e8; border: 1px solid #d3d2d8; border-width: 1px 1px 0 0; border-top-right-radius: 4px; font-size: 11px; color: #3a3b40; }
```
